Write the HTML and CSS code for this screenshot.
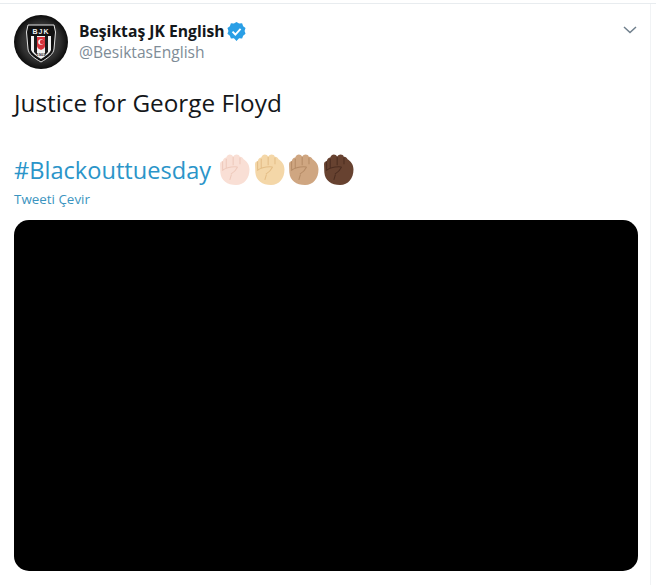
FILE: index.html
```html
<!DOCTYPE html>
<html lang="tr">
<head>
<meta charset="utf-8">
<title>Tweet</title>
<link rel="stylesheet" href="styles.css">
</head>
<body>
<article class="tweet">
  <header class="head">
    <svg class="avatar" viewBox="0 0 54 54" aria-hidden="true">
      <defs>
        <radialGradient id="ball" cx="50%" cy="50%" r="50%">
          <stop offset="0" stop-color="#505050"/>
          <stop offset=".7" stop-color="#303030"/>
          <stop offset="1" stop-color="#0c0c0c"/>
        </radialGradient>
      </defs>
      <circle cx="27" cy="27" r="27" fill="url(#ball)"/>
      <path d="M14 10h26l1.500 7-1.500 17c-.5 5-6 9-13 13-7-4-12.500-8-13-13l-1.500-17z" fill="#111" stroke="#e4e4e4" stroke-width="1"/>
      <path d="M17 21h20v14c-1 3-5 6-10 9-5-3-9-6-10-9z" fill="#f2f2f2"/>
      <path d="M20 21h3v19l-3-3zM31 21h3v16l-3 3z" fill="#1c1c1c"/>
      <path d="M23 22h8v9c0 2-2 3-4 4-2-1-4-2-4-4z" fill="#d8343c"/>
      <circle cx="27" cy="27" r="2.800" fill="#f6f6f6"/>
      <circle cx="28" cy="27" r="2.200" fill="#d8343c"/>
      <text class="logo-letters" x="27" y="19" text-anchor="middle">BJK</text>
      <text class="logo-year" x="27" y="41" text-anchor="middle">1903</text>
    </svg>
    <div class="who">
      <div class="name-row">
        <span class="name">Beşiktaş JK English</span>
        <svg class="badge" viewBox="0 0 20 20" aria-hidden="true">
          <path d="M10 0l2.700 1.700 3.200-.3 1.100 3 2.500 2-1 3 1 3-2.500 2-1.100 3-3.200-.3L10 20l-2.700-2.900-3.200.3-1.100-3-2.500-2 1-3-1-3 2.500-2 1.100-3 3.200.3z" fill="#2a9fe6"/>
          <path d="M5.800 10.200l3 3 5.500-6" fill="none" stroke="#fff" stroke-width="2"/>
        </svg>
      </div>
      <div class="handle">@BesiktasEnglish</div>
    </div>
    <svg class="chevron" viewBox="0 0 14 8" aria-hidden="true">
      <path d="M1 1l6 5.500L13 1" fill="none" stroke="#6f7f8c" stroke-width="1.500"/>
    </svg>
  </header>
  <p class="text">Justice for George Floyd</p>
  <p class="tags">
    <span class="hashtag">#Blackouttuesday</span>
    <span class="fists">
      <svg class="fist" viewBox="0 0 30 30" aria-hidden="true"><use href="#fist-shape" class="tone-1"/></svg>
      <svg class="fist" viewBox="0 0 30 30" aria-hidden="true"><use href="#fist-shape" class="tone-2"/></svg>
      <svg class="fist" viewBox="0 0 30 30" aria-hidden="true"><use href="#fist-shape" class="tone-3"/></svg>
      <svg class="fist" viewBox="0 0 30 30" aria-hidden="true"><use href="#fist-shape" class="tone-4"/></svg>
    </span>
  </p>
  <a class="translate">Tweeti Çevir</a>
  <div class="media"></div>
</article>
<svg class="defs" aria-hidden="true">
  <symbol id="fist-shape" viewBox="0 0 30 30">
    <path class="fill" d="M1 10c0-2 1-3 2.500-3 .5-2 2-3.500 3.500-3.500 .7-2 2-3 3.500-3 1.500 0 2.500.7 3.200 2 .8-1.300 2-2 3.300-2 1.500 0 2.700.8 3.300 2.300C21.700 2.500 23 3.500 23.800 5c3 2 5.700 5 5.700 10 0 8.500-5 15-13 15C8 30 2 26 1.300 18z"/>
    <path class="line" d="M7 4.500v9M13.700 3v8M20.300 3.500v6.500M3.500 7v8M3 16c4-3 9-4 15-3.500M18 12.500c-1.500 3-4 5.500-6.500 7M12 20l-1.500 5" fill="none" stroke-width="1"/>
  </symbol>
</svg>
</body>
</html>
```
FILE: styles.css
```css
html {
  background: #fff;
}
body {
  box-sizing: border-box;
  width: 656px;
  height: 582px;
  margin: 3px 0 0;
  padding: 0;
  overflow: hidden;
  border-top: 1px solid #e8ecef;
  font-family: "Open Sans", "Noto Sans", sans-serif;
}
.tweet {
  box-sizing: border-box;
  width: 651px;
  height: 581px;
  padding: 11px 13px 0 14px;
  border-right: 1px solid #f1f3f5;
}
.head {
  display: flex;
  align-items: flex-start;
  height: 54px;
}
.avatar {
  width: 54px;
  height: 54px;
  flex: none;
}
.logo-letters {
  font: 700 7px "Liberation Sans", sans-serif;
  letter-spacing: 1px;
  fill: #f0f0f0;
}
.logo-year {
  font: 700 4px "Liberation Sans", sans-serif;
  fill: #222;
}
.who {
  margin-left: 11px;
  padding-top: 5px;
}
.name-row {
  display: flex;
  align-items: center;
  height: 22px;
}
.name {
  font-size: 15.700px;
  font-weight: 700;
  line-height: 22px;
  color: #14171a;
}
.badge {
  width: 19px;
  height: 19px;
  margin-left: 2px;
}
.handle {
  font-size: 15.600px;
  line-height: 21px;
  color: #7e8c97;
}
.chevron {
  width: 14px;
  height: 8px;
  margin-left: auto;
  margin-top: 11px;
}
.text {
  margin: 18px 0 0;
  font-size: 24.300px;
  line-height: 32px;
  color: #14171a;
}
.tags {
  display: flex;
  align-items: center;
  margin: 35px 0 0;
  height: 32px;
}
.hashtag {
  font-size: 23.600px;
  line-height: 32px;
  color: #2b95c9;
}
.fists {
  display: flex;
  gap: 3.500px;
  margin-left: 8px;
  margin-top: -2px;
}
.fist {
  width: 31px;
  height: 31px;
}
.tone-1 { --skin: #f9dfd5; --crease: #eec9bb; }
.tone-2 { --skin: #f4d7a8; --crease: #e3bd86; }
.tone-3 { --skin: #cfa681; --crease: #b58b66; }
.tone-4 { --skin: #674230; --crease: #4b2d20; }
.fill { fill: var(--skin); }
.line { stroke: var(--crease); }
.translate {
  display: block;
  margin-top: 4px;
  font-size: 13.400px;
  line-height: 18px;
  color: #3b94c0;
}
.media {
  margin-top: 12px;
  width: 624px;
  height: 351px;
  background: #000;
  border-radius: 15px;
}
.defs {
  position: absolute;
  width: 0;
  height: 0;
}
```
